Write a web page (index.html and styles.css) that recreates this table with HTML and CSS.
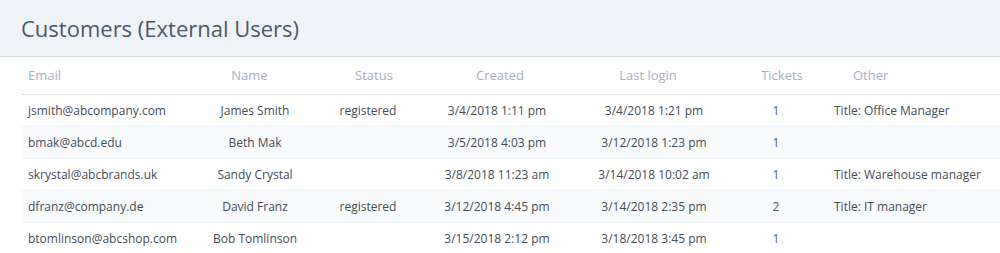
FILE: index.html
```html
<!DOCTYPE html>
<html>
<head>
<meta charset="utf-8">
<link rel="stylesheet" href="styles.css">
</head>
<body>
<div class="page">
  <header class="titlebar">
    <h1 class="title">Customers (External Users)</h1>
  </header>
  <table class="users">
    <colgroup>
      <col class="c-email"><col class="c-name"><col class="c-status"><col class="c-created"><col class="c-login"><col class="c-tickets"><col class="c-other">
    </colgroup>
    <thead>
      <tr>
        <th class="h-email">Email</th>
        <th class="h-name">Name</th>
        <th class="h-status">Status</th>
        <th class="h-created">Created</th>
        <th class="h-login">Last login</th>
        <th class="h-tickets">Tickets</th>
        <th class="h-other">Other</th>
      </tr>
    </thead>
    <tbody>
      <tr>
        <td class="email">jsmith@abcompany.com</td>
        <td class="ctr">James Smith</td>
        <td class="ctr">registered</td>
        <td class="ctr">3/4/2018 1:11 pm</td>
        <td class="ctr">3/4/2018 1:21 pm</td>
        <td class="ctr tickets">1</td>
        <td class="other">Title: Office Manager</td>
      </tr>
      <tr>
        <td class="email">bmak@abcd.edu</td>
        <td class="ctr">Beth Mak</td>
        <td class="ctr"></td>
        <td class="ctr">3/5/2018 4:03 pm</td>
        <td class="ctr">3/12/2018 1:23 pm</td>
        <td class="ctr tickets">1</td>
        <td class="other"></td>
      </tr>
      <tr>
        <td class="email">skrystal@abcbrands.uk</td>
        <td class="ctr">Sandy Crystal</td>
        <td class="ctr"></td>
        <td class="ctr">3/8/2018 11:23 am</td>
        <td class="ctr">3/14/2018 10:02 am</td>
        <td class="ctr tickets">1</td>
        <td class="other">Title: Warehouse manager</td>
      </tr>
      <tr>
        <td class="email">dfranz@company.de</td>
        <td class="ctr">David Franz</td>
        <td class="ctr">registered</td>
        <td class="ctr">3/12/2018 4:45 pm</td>
        <td class="ctr">3/14/2018 2:35 pm</td>
        <td class="ctr tickets">2</td>
        <td class="other">Title: IT manager</td>
      </tr>
      <tr>
        <td class="email">btomlinson@abcshop.com</td>
        <td class="ctr">Bob Tomlinson</td>
        <td class="ctr"></td>
        <td class="ctr">3/15/2018 2:12 pm</td>
        <td class="ctr">3/18/2018 3:45 pm</td>
        <td class="ctr tickets">1</td>
        <td class="other"></td>
      </tr>
    </tbody>
  </table>
</div>
</body>
</html>
```
FILE: styles.css
```css
* { box-sizing: border-box; }
html, body { margin: 0; padding: 0; background: #ffffff; }
body {
  font-family: "Open Sans", "Liberation Sans", sans-serif;
  color: #454d56;
  font-size: 12px;
}
.page { width: 1000px; overflow: hidden; }
.titlebar {
  height: 57px;
  background: #eff3f8;
  border-bottom: 1px solid #d9dde3;
  padding: 13px 0 0 21px;
}
.title {
  margin: 0;
  font-size: 22px;
  font-weight: 400;
  line-height: 30px;
  color: #4b5968;
}
.users {
  margin-left: 21px;
  width: 979px;
  border-collapse: collapse;
  table-layout: fixed;
}
.c-email { width: 169px; }
.c-name { width: 130px; }
.c-status { width: 96px; }
.c-created { width: 162px; }
.c-login { width: 152px; }
.c-tickets { width: 92px; }
.c-other { width: 178px; }

.users th {
  height: 37px;
  font-weight: 400;
  font-size: 13px;
  color: #a8afc5;
  text-align: center;
  padding: 0;
  border-bottom: 1px solid #dfe2e7;
  vertical-align: middle;
}
.users th.h-email { text-align: left; padding-left: 7px; }
.users th.h-name { padding-right: 11px; }
.users th.h-status { padding-left: 12px; }
.users th.h-created { padding-left: 6px; }
.users th.h-login { padding-right: 12px; }
.users th.h-tickets { padding-left: 12px; }
.users th.h-other { text-align: left; padding-left: 31px; }

.users td {
  height: 32px;
  padding: 0;
  vertical-align: middle;
  white-space: nowrap;
  border-bottom: 1px solid #eef1f5;
}
.users tbody tr:nth-child(even) td { background: #f8fafc; }
.users tbody tr:last-child td { border-bottom: none; }
.users td.email { padding-left: 7px; }
.users td.ctr { text-align: center; }
.users td.tickets { color: #3f6070; }
.users td.other { padding-left: 12px; }
```
